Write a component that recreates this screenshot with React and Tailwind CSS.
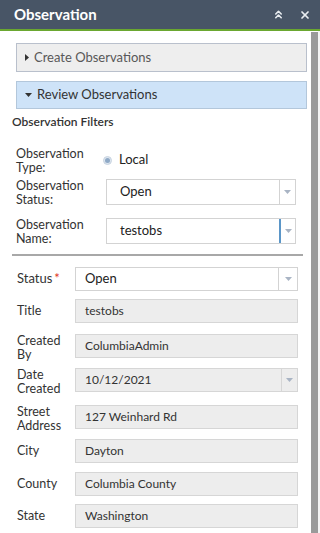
import { ChevronsUp, X } from "lucide-react";

const Arrow = () => (
  <svg width="7" height="4" viewBox="0 0 7 4" className="block">
    <path d="M0 0h7L3.5 4z" fill="#a9b4c4" />
  </svg>
);

const SelectBox = ({ value, active }) => (
  <div className="flex h-[26px] items-stretch border border-[#d3d3d3] bg-white">
    <div className="flex flex-1 items-center pl-[13px] text-[13px] text-[#222]">{value}</div>
    <div
      className={`flex w-[16px] items-center justify-center ${
        active ? "border-l-[2px] border-[#5b96c8]" : "border-l border-[#d3d3d3]"
      }`}
    >
      <Arrow />
    </div>
  </div>
);

const ReadBox = ({ value, arrow }) => (
  <div className="flex h-[24px] items-stretch border border-[#d6d6d6] bg-[#ededed]">
    <div className="flex flex-1 items-center pl-[9px] text-[12px] text-[#333]">{value}</div>
    {arrow ? (
      <div className="flex w-[16px] items-center justify-center border-l border-[#d6d6d6]">
        <Arrow />
      </div>
    ) : null}
  </div>
);

const FilterRow = ({ label, className, children }) => (
  <div className={`grid h-[26px] grid-cols-[90px_1fr] items-start ${className}`}>
    <div className="text-[12.5px] leading-[13.5px] text-[#333]">{label}</div>
    {children}
  </div>
);

export default function App() {
  const fields = [
    { label: "Title", value: "testobs", gap: "mt-[8px]" },
    { label: "Created By", value: "ColumbiaAdmin", gap: "mt-[11px]" },
    { label: "Date Created", value: "10/12/2021", arrow: true, gap: "mt-[10px]" },
    { label: "Street Address", value: "127 Weinhard Rd", gap: "mt-[13px]" },
    { label: "City", value: "Dayton", gap: "mt-[10px]" },
    { label: "County", value: "Columbia County", gap: "mt-[9px]" },
    { label: "State", value: "Washington", gap: "mt-[8px]" }
  ];

  return (
    <div className="flex h-[533px] w-[320px] flex-col overflow-hidden bg-white font-['Lato',sans-serif]">
      <header className="flex h-[29px] shrink-0 items-center justify-between bg-[#485566] pl-[14px] pr-[9px]">
        <h1 className="text-[15px] font-bold text-white">Observation</h1>
        <div className="flex items-center gap-[14px] text-[#e8ecf0]">
          <ChevronsUp size={13} strokeWidth={3} />
          <X size={12} strokeWidth={3.5} />
        </div>
      </header>
      <div className="h-[2px] shrink-0 bg-[#6aa730]" />

      <div className="flex flex-1 overflow-hidden">
        <main className="flex-1">
          <div className="ml-4 mr-1 mt-[12px] space-y-[9px]">
            <div className="flex h-[29px] items-center gap-[5px] border border-[#b9c0cc] bg-[#eeeeee] pl-[8px] text-[13px] text-[#585858]">
              <svg width="4" height="7" viewBox="0 0 4 7">
                <path d="M0 0l4 3.5L0 7z" fill="#333" />
              </svg>
              Create Observations
            </div>
            <div className="flex h-[28px] items-center gap-[5px] border border-[#b3c7db] bg-[#cee3f8] pl-[8px] text-[13px] text-[#333]">
              <svg width="7" height="4" viewBox="0 0 7 4">
                <path d="M0 0h7L3.5 4z" fill="#333" />
              </svg>
              Review Observations
            </div>
          </div>

          <h2 className="ml-[12px] mt-[4px] h-[18px] text-[12px] font-semibold leading-[18px] text-[#333]">
            Observation Filters
          </h2>

          <div className="ml-4 mr-[15px]">
            <FilterRow className="mt-[16px]" label={<>Observation<br />Type:</>}>
              <div className="-ml-[3px] flex h-[26px] items-center gap-[7px]">
                <span className="flex h-[9px] w-[9px] items-center justify-center rounded-full border border-[#c9d4e0] bg-[#dde6f0]">
                  <span className="h-[5px] w-[5px] rounded-full bg-[#8fa9c6]" />
                </span>
                <span className="text-[13px] text-[#222]">Local</span>
              </div>
            </FilterRow>
            <FilterRow className="mt-[6px]" label={<>Observation<br />Status:</>}>
              <SelectBox value="Open" />
            </FilterRow>
            <FilterRow className="mt-[13px]" label={<>Observation<br />Name:</>}>
              <SelectBox value="testobs" active />
            </FilterRow>
          </div>

          <div className="ml-[12px] mr-[8px] mt-[10px] h-[2px] bg-[#a8a8a8]" />

          <div className="ml-[17px] mr-[13px] mt-[11px]">
            <div className="grid h-[24px] grid-cols-[58px_1fr] items-center">
              <div className="text-[13px] text-[#333]">
                Status<span className="ml-[2px] text-[#e0341c]">*</span>
              </div>
              <div className="flex h-[24px] items-stretch border border-[#d3d3d3] bg-white">
                <div className="flex flex-1 items-center pl-[9px] text-[13px] text-[#222]">Open</div>
                <div className="flex w-[19px] items-center justify-center border-l border-[#d3d3d3]">
                  <Arrow />
                </div>
              </div>
            </div>
            {fields.map((field) => {
              const twoLine = field.label.includes(" ");
              return (
                <div
                  key={field.label}
                  className={`grid h-[24px] grid-cols-[58px_1fr] ${twoLine ? "items-start" : "items-center"} ${field.gap}`}
                >
                  <div className="text-[12.5px] leading-[13.5px] text-[#333]">
                    {twoLine
                      ? field.label.split(" ").map((word) => <div key={word}>{word}</div>)
                      : field.label}
                  </div>
                  <ReadBox value={field.value} arrow={field.arrow} />
                </div>
              );
            })}
          </div>
        </main>
        <div className="mt-[1px] w-[7px] bg-[#9a9a9a]" />
        <div className="w-[2px] bg-[#f4f4f4]" />
      </div>
    </div>
  );
}
